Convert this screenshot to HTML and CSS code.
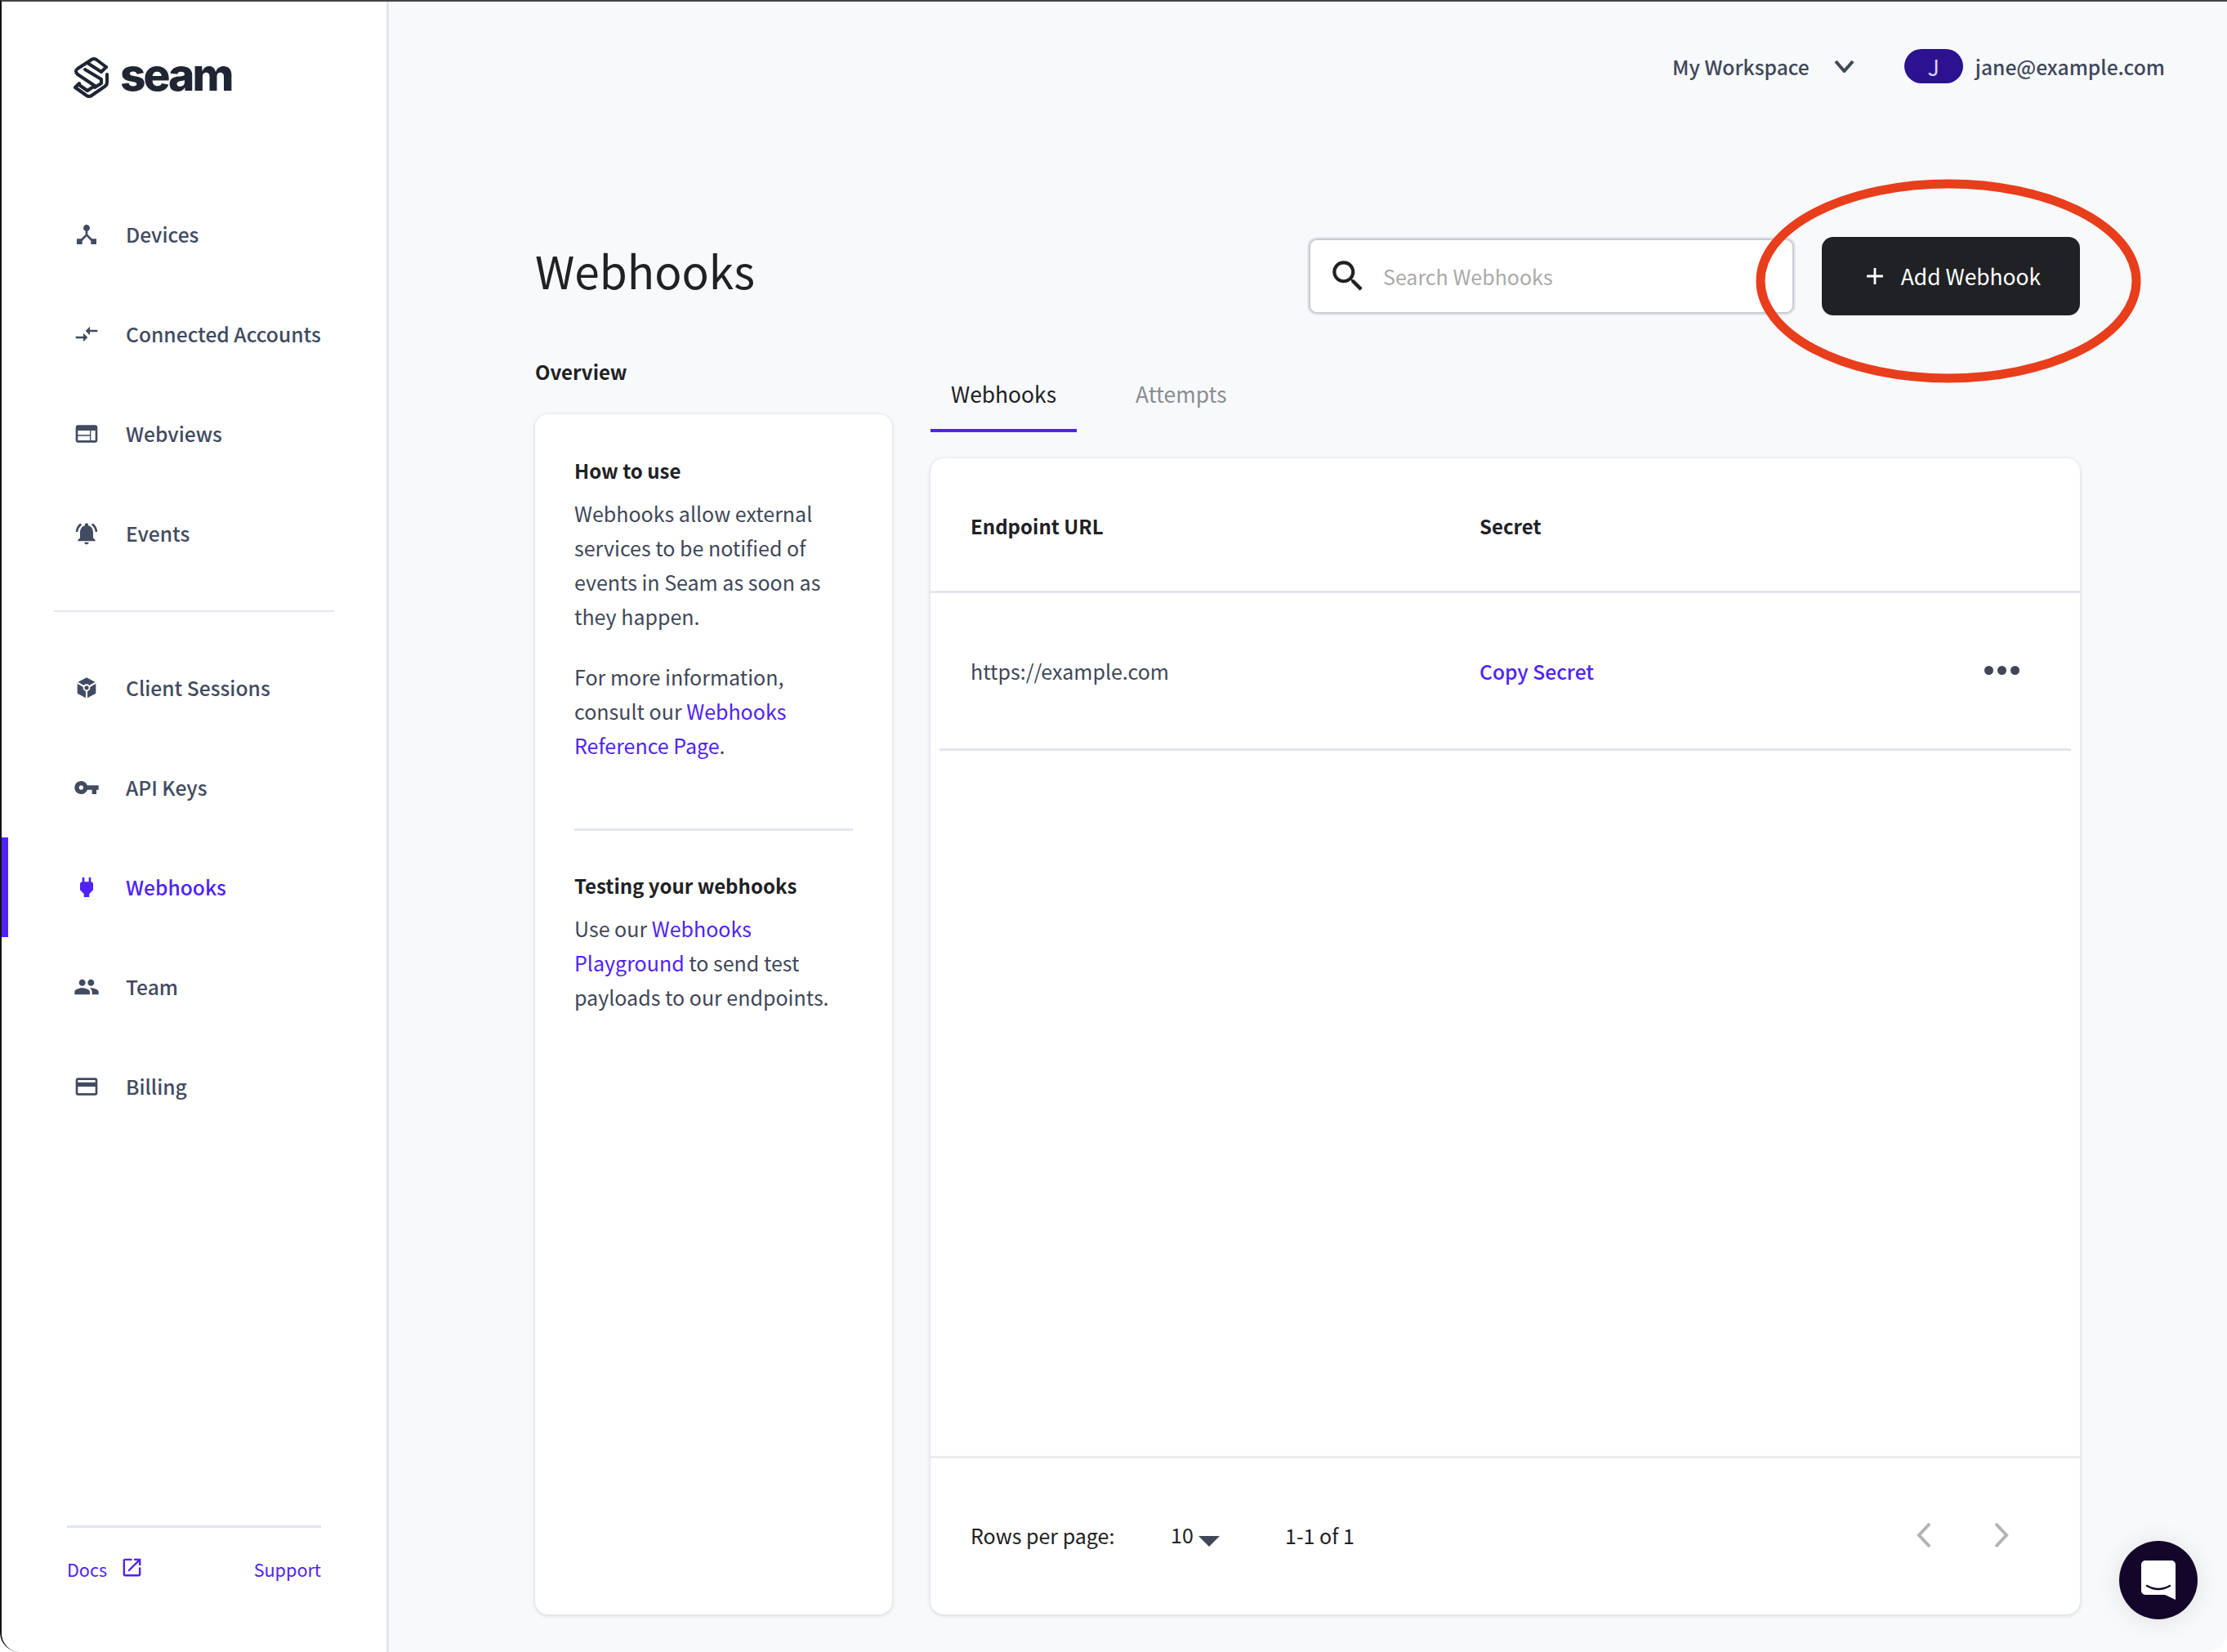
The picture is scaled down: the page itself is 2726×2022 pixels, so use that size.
FILE: index.html
```html
<!DOCTYPE html>
<html>
<head>
  <title>Webhooks - Seam</title>
  <meta charset="UTF-8">
  <link rel="stylesheet" href="styles.css">
</head>
<body>
<div class="app">
  <div class="sidebar">
    <div class="logo">
      <svg class="logo-mark" viewBox="10 9 43 51" fill="none" stroke="#1f2532" stroke-width="4" stroke-linejoin="round" stroke-linecap="round">
        <path d="M50 21 L38 12 Q35 10 32 12 L15 23 Q11 26 15 30 L36 44 L27 50 L17 43"/>
        <path d="M50 21 L44 27 L27 16"/>
        <path d="M24 24 L44 36 L44 41 L36 46"/>
        <path d="M51 30 V40 Q51 43 48 45 L32 56 Q29 58 26 56 L12 46 L17 41"/>
      </svg>
      <span class="logo-text">seam</span>
    </div>
    <div class="nav">
      <a class="nav-item"><svg viewBox="0 0 24 24"><path d="M17 16l-4-4V8.82C14.16 8.4 15 7.3 15 6c0-1.66-1.34-3-3-3S9 4.34 9 6c0 1.3.84 2.4 2 2.82V12l-4 4H3v5h5v-3.05l4-4.2 4 4.2V21h5v-5h-4z"/></svg>Devices</a>
      <a class="nav-item"><svg viewBox="0 0 24 24"><path d="M9.01 14H2v2h7.01v3L13 15l-3.99-4v3zm5.98-1v-3H22V8h-7.01V5L11 9l3.99 4z"/></svg>Connected Accounts</a>
      <a class="nav-item"><svg viewBox="0 0 24 24"><path d="M20 4H4c-1.1 0-1.99.9-1.99 2L2 18c0 1.1.9 2 2 2h16c1.1 0 2-.9 2-2V6c0-1.1-.9-2-2-2zm-5 14H4v-4h11v4zm0-5H4V9h11v4zm5 5h-4V9h4v9z"/></svg>Webviews</a>
      <a class="nav-item"><svg viewBox="0 0 24 24"><path d="M7.58 4.08L6.15 2.65C3.75 4.48 2.17 7.3 2.03 10.5h2c.15-2.65 1.51-4.97 3.55-6.42zm12.39 6.42h2c-.15-3.2-1.73-6.02-4.12-7.85l-1.42 1.43c2.02 1.45 3.39 3.77 3.54 6.42zM18 11c0-3.07-1.64-5.64-4.5-6.32V4c0-.83-.67-1.5-1.5-1.5s-1.5.67-1.5 1.5v.68C7.63 5.36 6 7.92 6 11v5l-2 2v1h16v-1l-2-2v-5zm-6 11c.14 0 .27-.01.4-.04.65-.14 1.18-.58 1.44-1.18.1-.24.15-.5.15-.78h-4c.01 1.1.9 2 2.01 2z"/></svg>Events</a>
    </div>
    <div class="nav-line"></div>
    <div class="nav">
      <a class="nav-item"><svg viewBox="0 0 24 24"><path d="M12 2.5 L20.5 7 V17 L12 21.5 L3.5 17 V7Z"/><path class="cube-cut" d="M12 12 L3.5 7.2 M12 12 L20.5 7.2 M12 12 V21.5"/><circle class="cube-hub" cx="12" cy="11.8" r="2.6"/></svg>Client Sessions</a>
      <a class="nav-item"><svg viewBox="0 0 24 24"><path d="M12.65 10C11.83 7.67 9.61 6 7 6c-3.31 0-6 2.69-6 6s2.69 6 6 6c2.61 0 4.83-1.67 5.65-4H17v4h4v-4h2v-4H12.65zM7 14c-1.1 0-2-.9-2-2s.9-2 2-2 2 .9 2 2-.9 2-2 2z"/></svg>API Keys</a>
      <a class="nav-item active"><svg viewBox="0 0 24 24"><path d="M16.01 7L16 3h-2v4h-4V3H8v4h-.01C7 6.99 6 7.99 6 8.99v5.49L9.5 18v3h5v-3l3.5-3.51v-5.5c0-1-1-2-1.99-1.99z"/></svg>Webhooks</a>
      <a class="nav-item"><svg viewBox="0 0 24 24"><path d="M16 11c1.66 0 2.99-1.34 2.99-3S17.66 5 16 5c-1.66 0-3 1.34-3 3s1.34 3 3 3zm-8 0c1.66 0 2.99-1.34 2.99-3S9.66 5 8 5C6.34 5 5 6.34 5 8s1.34 3 3 3zm0 2c-2.33 0-7 1.17-7 3.5V19h14v-2.5c0-2.33-4.67-3.5-7-3.5zm8 0c-.29 0-.62.02-.97.05 1.16.84 1.97 1.97 1.97 3.45V19h6v-2.5c0-2.33-4.67-3.5-7-3.5z"/></svg>Team</a>
      <a class="nav-item"><svg viewBox="0 0 24 24"><path d="M20 4H4c-1.11 0-1.99.89-1.99 2L2 18c0 1.11.89 2 2 2h16c1.11 0 2-.89 2-2V6c0-1.11-.89-2-2-2zm0 14H4v-6h16v6zm0-10H4V6h16v2z"/></svg>Billing</a>
    </div>
    <div class="side-foot">
      <a class="docs">Docs <svg viewBox="0 0 24 24"><path d="M19 19H5V5h7V3H5c-1.11 0-2 .9-2 2v14c0 1.1.89 2 2 2h14c1.1 0 2-.9 2-2v-7h-2v7zM14 3v2h3.59l-9.83 9.83 1.41 1.41L19 6.41V10h2V3h-7z"/></svg></a>
      <a>Support</a>
    </div>
  </div>

  <div class="main">
    <div class="topbar">
      <span class="workspace">My Workspace</span>
      <svg class="chevron" viewBox="0 0 25 16" fill="none"><path d="M2 2 L12.5 14 L23 2"/></svg>
      <span class="avatar">J</span>
      <span class="email">jane@example.com</span>
    </div>

    <div class="page">
      <div class="page-head">
        <h1>Webhooks</h1>
        <div class="search">
          <svg viewBox="0 0 24 24"><path d="M15.5 14h-.79l-.28-.27C15.41 12.59 16 11.11 16 9.5 16 5.91 13.09 3 9.5 3S3 5.91 3 9.5 5.91 16 9.5 16c1.61 0 3.09-.59 4.23-1.57l.27.28v.79l5 4.99L20.49 19l-4.99-5zm-6 0C7.01 14 5 11.99 5 9.5S7.01 5 9.5 5 14 7.01 14 9.5 11.99 14 9.5 14z"/></svg>
          <span>Search Webhooks</span>
        </div>
        <div class="add-btn">
          <svg viewBox="0 0 24 24"><path d="M19 13h-6v6h-2v-6H5v-2h6V5h2v6h6v2z"/></svg>
          Add Webhook
        </div>
      </div>

      <div class="columns">
        <div class="overview">
          <div class="overview-label">Overview</div>
          <div class="card info">
            <h3>How to use</h3>
            <p>Webhooks allow external services to be notified of events in Seam as soon as they happen.</p>
            <p class="second">For more information, consult our <a>Webhooks Reference Page</a>.</p>
            <div class="info-line"></div>
            <h3>Testing your webhooks</h3>
            <p>Use our <a>Webhooks Playground</a> to send test payloads to our endpoints.</p>
          </div>
        </div>

        <div class="content">
          <div class="tabs">
            <span class="tab current">Webhooks</span>
            <span class="tab">Attempts</span>
          </div>
          <div class="card table">
            <div class="thead">
              <span class="col-url">Endpoint URL</span>
              <span>Secret</span>
            </div>
            <div class="trow">
              <span class="col-url">https://example.com</span>
              <a>Copy Secret</a>
              <span class="dots"><i></i><i></i><i></i></span>
            </div>
            <div class="tfoot">
              <span class="rows-label">Rows per page:</span>
              <span class="rows-value">10<i class="caret"></i></span>
              <span class="rows-range">1-1 of 1</span>
              <svg class="pager first" viewBox="0 0 20 32" fill="none"><path d="M17 2 L4 16 L17 30"/></svg>
              <svg class="pager" viewBox="0 0 20 32" fill="none"><path d="M3 2 L16 16 L3 30"/></svg>
            </div>
          </div>
        </div>
      </div>
    </div>
  </div>

  <svg class="mark" viewBox="0 0 472 250" fill="none"><ellipse cx="236" cy="125" rx="230" ry="119"/></svg>

  <div class="chat">
    <svg viewBox="0 0 42 48"><path d="M5 0h32a5 5 0 0 1 5 5v43l-13-6H5a5 5 0 0 1-5-5V5a5 5 0 0 1 5-5z" fill="#fff"/><path d="M7 31q14 8 28 0" fill="none" stroke="#14062b" stroke-width="2.5" stroke-linecap="round"/></svg>
  </div>
</div>
</body>
</html>
```

FILE: styles.css
```css
*{
  box-sizing: border-box;
}
html, body{
  margin: 0;
  padding: 0;
  background: #fff;
}
body{
  font-family: "Noto Sans CJK JP", "Noto Sans", sans-serif;
  font-size: 25px;
  color: #3f4759;
}
a{
  color: #4f23f7;
}
h1, h3, p{
  margin: 0;
  font-weight: normal;
}
.app{
  position: relative;
  display: flex;
  height: 2022px;
  overflow: hidden;
  background: #f8f9fb;
  border-top: 2px solid #444;
  border-left: 2px solid #111;
  border-radius: 0 0 24px 24px;
}

/* sidebar */
.sidebar{
  display: flex;
  flex-direction: column;
  flex: none;
  width: 474px;
  background: #fff;
  border-right: 3px solid #e2e6ef;
}
.logo{
  display: flex;
  align-items: center;
  gap: 14px;
  height: 224px;
  padding: 0 0 38px 88px;
}
.logo-mark{
  width: 43px;
  height: 51px;
}
.logo-text{
  margin-top: -8px;
  font-family: Inter, sans-serif;
  font-weight: 800;
  font-size: 55px;
  letter-spacing: -3px;
  color: #1f2532;
}
.nav-item{
  display: flex;
  align-items: center;
  gap: 32px;
  height: 122px;
  padding: 0 0 2px 88px;
  font-size: 24.6px;
  font-weight: 500;
  color: #414b61;
}
.nav-item svg{
  width: 32px;
  height: 32px;
  margin-top: 2px;
  fill: #414b61;
}
.nav-item.active{
  color: #4f23f7;
  box-shadow: inset 8px 0 0 #4f23f7;
}
.nav-item.active svg{
  fill: #4f23f7;
}
.cube-cut{
  fill: none;
  stroke: #fff;
  stroke-width: 1.6;
}
.nav-item svg .cube-hub{
  fill: #414b61;
  stroke: #fff;
  stroke-width: 1.4;
}
.nav-line{
  height: 2px;
  margin: 33px 64px 32px 64px;
  background: #e2e6ef;
}
.side-foot{
  display: flex;
  justify-content: space-between;
  align-items: center;
  margin: auto 80px 0 80px;
  height: 155px;
  padding-bottom: 51px;
  border-top: 3px solid #e2e6ef;
  font-size: 21.6px;
}
.docs{
  display: flex;
  align-items: center;
  gap: 16px;
}
.docs svg{
  width: 29px;
  height: 29px;
  fill: #4f23f7;
  margin-top: -4px;
}

/* main */
.main{
  flex: 1;
  min-width: 0;
}
.topbar{
  display: flex;
  align-items: center;
  justify-content: flex-end;
  height: 162px;
  padding: 0 76px 4px 0;
  font-size: 24.6px;
  font-weight: 500;
}
.chevron{
  width: 25px;
  height: 16px;
  margin: 0 61px 0 30px;
}
.chevron path{
  stroke: #3f4759;
  stroke-width: 4;
}
.avatar{
  display: flex;
  align-items: center;
  justify-content: center;
  width: 72px;
  height: 42px;
  margin-right: 15px;
  border-radius: 21px;
  background: #2c1190;
  color: #d8d0f5;
  font-size: 27px;
  font-weight: normal;
}
.page{
  margin: 0 180px 0 179px;
}
.page-head{
  display: flex;
  align-items: center;
  height: 96px;
  margin-top: 126px;
}
h1{
  flex: 1;
  padding-bottom: 16px;
  font-size: 55px;
  color: #202124;
}
.search{
  display: flex;
  align-items: center;
  gap: 18px;
  width: 594px;
  height: 92px;
  padding-left: 21px;
  background: #fff;
  border: 2px solid #c9ccd2;
  border-radius: 10px;
  box-shadow: 0 0 0 2px #e4e7ec;
  color: #aaa;
}
.search svg{
  width: 50px;
  height: 50px;
  fill: #202124;
}
.add-btn{
  display: flex;
  align-items: center;
  justify-content: center;
  gap: 15px;
  width: 316px;
  height: 96px;
  margin-left: 34px;
  padding-bottom: 1px;
  background: #202124;
  border-radius: 14px;
  color: #fff;
  font-size: 26.4px;
}
.add-btn svg{
  width: 34px;
  height: 34px;
  fill: #fff;
}
.columns{
  display: flex;
  gap: 47px;
  height: 1541px;
  margin-top: 49px;
}
.card{
  background: #fff;
  border-radius: 16px;
  box-shadow: 0 1px 5px rgba(60, 70, 100, .22);
}
.overview{
  display: flex;
  flex-direction: column;
  width: 437px;
}
.overview-label{
  height: 72px;
  line-height: 40px;
  font-size: 24px;
  font-weight: 700;
  color: #202124;
}
.info{
  flex: 1;
  padding: 48px 48px 0;
  line-height: 42px;
}
.info h3{
  margin-bottom: 10px;
  font-weight: 700;
  font-size: 24px;
  color: #202124;
}
.info .second{
  margin-top: 32px;
}
.info-line{
  height: 3px;
  margin: 81px 0 46px;
  background: #e2e6ef;
}
.content{
  display: flex;
  flex: 1;
  flex-direction: column;
  min-width: 0;
}
.tabs{
  display: flex;
  height: 94px;
  margin-bottom: 32px;
  gap: 47px;
}
.tab{
  padding: 27px 25px 0;
  color: #8a8d93;
  font-size: 26.4px;
}
.tab.current{
  color: #202124;
  border-bottom: 4px solid #4f23f7;
}
.table{
  display: flex;
  flex: 1;
  flex-direction: column;
}
.thead, .trow{
  display: flex;
  align-items: center;
  padding-left: 49px;
}
.thead{
  height: 165px;
  padding-top: 2px;
  border-bottom: 3px solid #e2e6ef;
  font-size: 24px;
  font-weight: 700;
  color: #202124;
}
.col-url{
  width: 623px;
}
.trow{
  position: relative;
  height: 193px;
  padding-bottom: 4px;
}
.trow::after{
  content: "";
  position: absolute;
  left: 11px;
  right: 11px;
  bottom: 0;
  height: 3px;
  background: #e2e6ef;
}
.trow a{
  font-size: 24.6px;
  font-weight: 500;
}
.dots{
  display: flex;
  gap: 5px;
  margin: 0 74px 0 auto;
}
.dots i{
  width: 11px;
  height: 11px;
  border-radius: 50%;
  background: #3f4759;
}
.tfoot{
  display: flex;
  align-items: center;
  height: 194px;
  margin-top: auto;
  padding: 0 0 4px 49px;
  border-top: 3px solid #ececee;
  color: #202124;
}
.rows-label{
  width: 245px;
}
.rows-value{
  display: flex;
  width: 140px;
  margin-top: -2px;
}
.caret{
  width: 0;
  height: 0;
  margin: 20px 0 0 6px;
  border-left: 13px solid transparent;
  border-right: 13px solid transparent;
  border-top: 13px solid #3f4759;
}
.pager{
  width: 20px;
  height: 32px;
  margin-left: 75px;
}
.pager.first{
  margin-left: auto;
}
.pager:last-child{
  margin-right: 86px;
}
.pager path{
  stroke: #b3b3b3;
  stroke-width: 4;
}

/* hand drawn mark over the page */
.mark{
  position: absolute;
  left: 2147px;
  top: 217px;
  width: 472px;
  height: 250px;
}
.mark ellipse{
  stroke: #e83e1c;
  stroke-width: 11;
}
.chat{
  position: absolute;
  left: 2592px;
  top: 1884px;
  display: flex;
  align-items: center;
  justify-content: center;
  width: 96px;
  height: 96px;
  border-radius: 50%;
  background: #14062b;
  box-shadow: 0 2px 30px rgba(0, 0, 0, .1);
}
.chat svg{
  width: 42px;
  height: 48px;
}
```
